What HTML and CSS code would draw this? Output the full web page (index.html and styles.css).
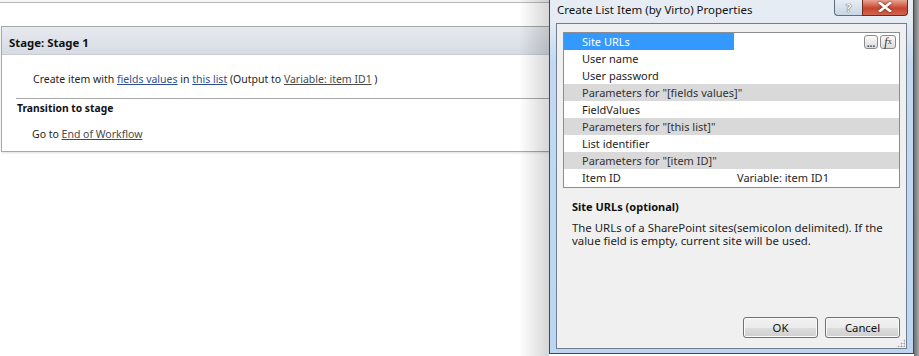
FILE: index.html
```html
<!DOCTYPE html>
<html>
<head>
<meta charset="utf-8">
<link rel="stylesheet" href="styles.css">
</head>
<body>
<div class="page">
  <div class="topbar"></div>
  <div class="stage">
    <div class="stage-head">Stage: Stage 1</div>
    <div class="stage-body">
      <div class="action">Create item with <a class="lnk">fields values</a> in <a class="lnk">this list</a> (Output to <a class="lnk dark">Variable: item ID1</a> )</div>
      <div class="transition">
        <div class="trans-title">Transition to stage</div>
        <div class="goto">Go to <a class="lnk dark">End of Workflow</a></div>
      </div>
    </div>
  </div>

  <div class="shadow-left"></div>
  <div class="dialog">
    <div class="titlebar">
      <div class="title">Create List Item (by Virto) Properties</div>
      <div class="caption-btns">
        <div class="cbtn help"><span class="q">?</span></div>
        <div class="cbtn close">
          <svg width="14" height="10" viewBox="0 0 14 10"><path d="M2 1 L12 9 M12 1 L2 9" stroke="#fff" stroke-width="2.6" stroke-linecap="square"/></svg>
        </div>
      </div>
    </div>
    <div class="client">
      <div class="grid">
        <div class="row sel"><div class="k">Site URLs</div><div class="v"><span class="mini dots">...</span><span class="mini fx"><i>f</i><sub>x</sub></span></div></div>
        <div class="row"><div class="k">User name</div><div class="v"></div></div>
        <div class="row"><div class="k">User password</div><div class="v"></div></div>
        <div class="row grp"><div class="k">Parameters for "[fields values]"</div></div>
        <div class="row"><div class="k">FieldValues</div><div class="v"></div></div>
        <div class="row grp"><div class="k">Parameters for "[this list]"</div></div>
        <div class="row"><div class="k">List identifier</div><div class="v"></div></div>
        <div class="row grp"><div class="k">Parameters for "[item ID]"</div></div>
        <div class="row"><div class="k">Item ID</div><div class="v">Variable: item ID1</div></div>
      </div>
      <div class="desc">
        <div class="desc-title">Site URLs (optional)</div>
        <div class="desc-text">The URLs of a SharePoint sites(semicolon delimited). If the value field is empty, current site will be used.</div>
      </div>
      <div class="buttons">
        <div class="btn">OK</div>
        <div class="btn">Cancel</div>
      </div>
      <div class="grip"></div>
    </div>
  </div>
  <div class="shadow-right"></div>
</div>
</body>
</html>
```
FILE: styles.css
```css
* { box-sizing: border-box; }
html, body { margin: 0; padding: 0; background: #fff; }
body {
  width: 919px; height: 356px; overflow: hidden;
  font-family: "Noto Sans", "Open Sans", sans-serif;
  font-size: 11.3px; color: #1e1e1e;
}
.page { position: relative; width: 919px; height: 356px; overflow: hidden; }

.topbar { height: 3px; background: #f5f5f5; border-bottom: 1px solid #b9b9b9; }

.stage {
  margin: 23px 0 0 1px;
  width: 620px;
  border: 1px solid #a8a8a8;
  box-shadow: 0 1px 2px rgba(0,0,0,0.12);
  background: #fff;
  font-size: 10.5px;
}
.stage-head {
  height: 28px;
  padding: 6px 0 0 7px;
  background: linear-gradient(#e7eaef, #d7dce4);
  border-bottom: 1px solid #c9cdd3;
  font-weight: bold; font-size: 11.4px; color: #111;
  line-height: 19px;
}
.stage-body { padding: 16px 0 0 0; }
.action { padding-left: 31px; line-height: 16px; height: 27px; }
.transition { margin-left: 14px; border-top: 1px solid #a9a9a9; padding-top: 1px; }
.trans-title { font-weight: bold; line-height: 16px; color: #111; font-size: 10.3px; padding-left: 1px; }
.goto { padding: 10px 0 9px 16px; line-height: 16px; }
.lnk { text-decoration: underline; color: #2f4f8f; }
.lnk.dark { color: #4a4a4a; }

.shadow-left {
  position: absolute; left: 519px; top: 0; width: 30px; height: 356px;
  background: linear-gradient(to right, rgba(0,0,0,0), rgba(0,0,0,0.16));
}
.shadow-right {
  position: absolute; left: 914px; top: 0; width: 5px; height: 356px;
  background: linear-gradient(to right, #6f6f6f, #a8a8a8);
}

.dialog {
  position: absolute; left: 549px; top: -8px;
  width: 365px; height: 362px;
  border: 1px solid #3b4a5a;
  border-top: none;
  background: linear-gradient(#e8edf3 0, #e4ebf3 30px, #c3d9f1 70px, #bcd6f2 100%);
  padding: 0 6px 4px 6px;
  display: flex; flex-direction: column;
}
.titlebar { height: 31px; display: flex; align-items: flex-start; position: relative; }
.title { padding: 10px 0 0 1px; font-size: 11.5px; color: #111; line-height: 16px; }
.caption-btns { position: absolute; right: -1px; top: 8px; display: flex; }
.cbtn { height: 16px; display: flex; align-items: center; justify-content: center;
  border: 1px solid #5c6d82; border-top: none; }
.help { width: 28px; background: linear-gradient(#e6edf5, #c9d6e4); border-radius: 0 0 0 4px; border-right: none; }
.help .q { display: block; color: #fff; font-weight: bold; font-size: 11px; line-height: 12px; height: 12px;
  text-shadow: 0 0 1px #3a4a5c, 0 0 1px #3a4a5c; }
.close { width: 46px; background: linear-gradient(#e8a493, #c7452e 55%, #d06650); border-radius: 0 0 4px 0; border-color: #6b2a20; padding-bottom: 1px; }
.close svg { filter: drop-shadow(0 0 1px #5a1a10); }

.client {
  flex: 1;
  background: #f0f0f0;
  border: 1px solid #6f7f90;
  padding: 8px 6px 0 6px;
  position: relative;
  display: flex; flex-direction: column;
}
.grid { border: 1px solid #8a8e94; background: #fff; padding: 0 0 1px 0; font-size: 11px; }
.row { display: flex; height: 17px; line-height: 17px; }
.row .k { width: 170px; padding-left: 18px; white-space: nowrap; }
.row .v { flex: 1; padding-left: 3px; display: flex; justify-content: flex-end; align-items: center; gap: 2px; padding-right: 3px; }
.row:last-child .v { justify-content: flex-start; }
.row.sel .k { background: #3399ff; color: #fff; }
.row.grp { background: #d9d9d9; }
.row.grp .k { width: auto; color: #333; }
.mini {
  width: 14px; height: 14px; border: 1px solid #8a8a8a; border-radius: 3px;
  background: linear-gradient(#fbfbfb, #dcdcdc);
  font-size: 10px; line-height: 10px; display: flex; align-items: center; justify-content: center; color: #333;
}
.mini.dots { padding-top: 2px; font-weight: bold; color: #444; }
.mini.fx { width: 16px; font-family: "Liberation Serif", serif; font-size: 12px; }
.mini.fx sub { font-size: 8px; vertical-align: -1px; }

.desc { padding: 11px 0 0 9px; font-size: 11.4px; }
.desc-title { font-weight: bold; line-height: 16px; color: #111; font-size: 11px; }
.desc-text { margin-top: 6px; line-height: 13px; width: 320px; color: #1e1e1e; }

.buttons { margin-top: auto; margin-bottom: 10px; display: flex; justify-content: flex-end; gap: 7px; }
.btn {
  width: 75px; height: 21px; border: 1px solid #707070; border-radius: 3px;
  background: linear-gradient(#f2f2f2 0, #ebebeb 50%, #dddddd 51%, #cfcfcf 100%);
  box-shadow: inset 0 0 0 1px #fbfbfb;
  display: flex; align-items: center; justify-content: center; color: #111;
}
.grip {
  position: absolute; right: 1px; bottom: 1px; width: 8px; height: 8px;
  background-image: radial-gradient(circle, #a0a0a0 0.9px, transparent 1.1px);
  background-size: 3px 3px;
  clip-path: polygon(100% 0, 100% 100%, 0 100%);
}
```
